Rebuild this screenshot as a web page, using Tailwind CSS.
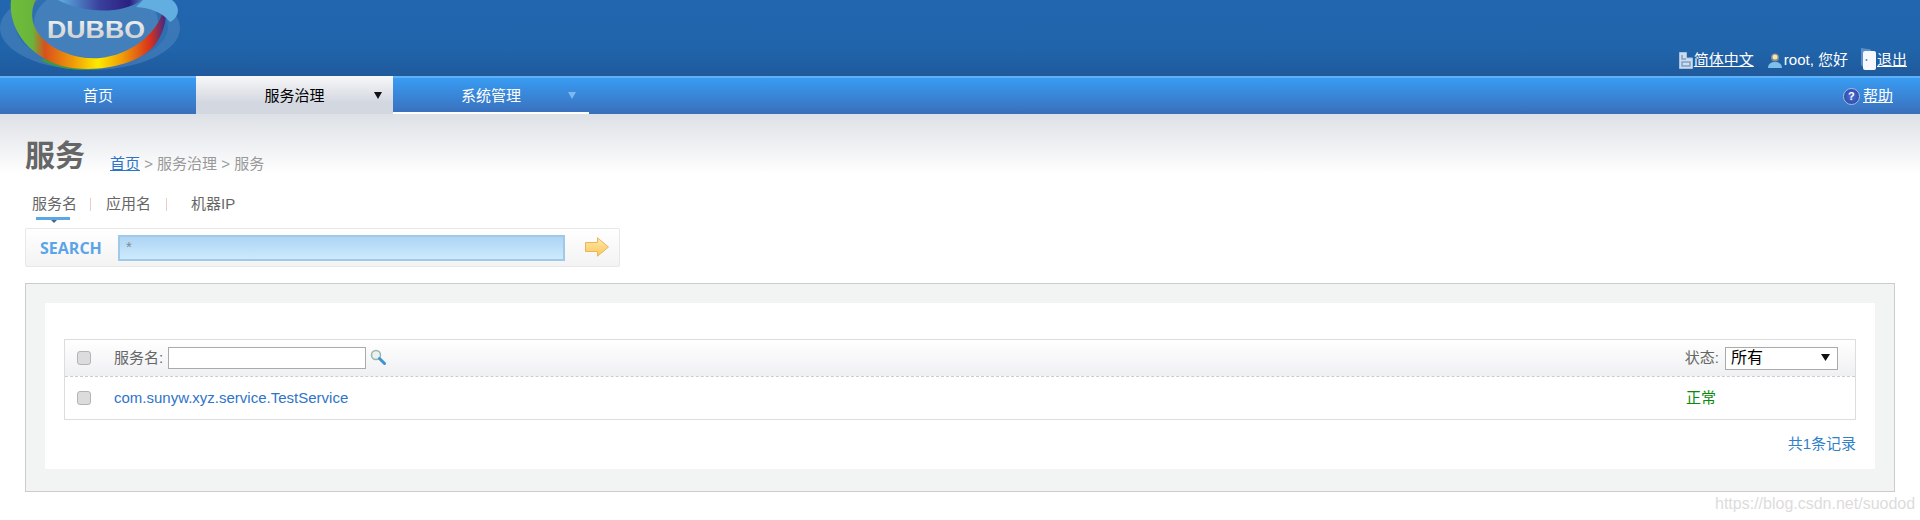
<!DOCTYPE html>
<html lang="zh-CN">
<head>
  <meta charset="UTF-8" />
  <title>Dubbo | 服务</title>
  <script src="https://cdn.jsdelivr.net/npm/@tailwindcss/browser@4"></script>
</head>
<body class="bg-white h-[520px] overflow-hidden relative text-[15px] text-[#666] font-['Liberation_Sans','Noto_Sans_CJK_SC',sans-serif]">

  <!-- Header -->
  <header class="h-[76px] flex justify-between bg-[linear-gradient(#2166ae,#2065ac_60%,#1f5a9c)]">
    <svg class="w-[182px] h-[76px] shrink-0" viewBox="0 0 182 76">
      <defs>
        <linearGradient id="ring" x1="0" x2="1" y1="0" y2="0">
          <stop offset="0" stop-color="#6fbd3a" />
          <stop offset=".14" stop-color="#69b53c" />
          <stop offset=".22" stop-color="#d8501c" />
          <stop offset=".4" stop-color="#f09a08" />
          <stop offset=".56" stop-color="#fdea00" />
          <stop offset=".72" stop-color="#f09a08" />
          <stop offset=".9" stop-color="#d8301c" />
          <stop offset="1" stop-color="#3a2a8c" />
        </linearGradient>
        <linearGradient id="swirl" x1="0" x2="1" y1="0" y2="0">
          <stop offset="0" stop-color="#5cb0e2" />
          <stop offset=".5" stop-color="#3a3f9c" />
          <stop offset=".85" stop-color="#2a2080" />
          <stop offset="1" stop-color="#4a70c0" />
        </linearGradient>
        <linearGradient id="word" x1="0" x2="0" y1="0" y2="1">
          <stop offset="0" stop-color="#f4f4f4" />
          <stop offset="1" stop-color="#c4c8cc" />
        </linearGradient>
      </defs>
      <ellipse cx="90" cy="28" rx="90" ry="42" fill="#5a8fc4" fill-opacity=".45" />
      <ellipse cx="92" cy="27" rx="76" ry="38" fill="#2e6fb2" />
      <ellipse cx="96" cy="22" rx="62" ry="36" fill="#4380bb" />
      <path d="M40 60C60 70 80 71 100 69L62 56Z" fill="#3b9a45" />
      <path d="M11 0C8 25 25 55 62 66C90 73 135 68 155 45C162 35 166 25 166 12L162 14C155 35 130 55 100 58C75 60 40 48 33 22C31 12 33 5 36 0Z" fill="url(#ring)" />
      <path d="M58 0C80 12 120 16 142 0Z" fill="url(#swirl)" />
      <path d="M143 0H172C182 8 178 18 170 22C162 12 150 8 136 7Z" fill="#62aee0" />
      <text x="47" y="38" textLength="98" lengthAdjust="spacingAndGlyphs" font-size="23" font-weight="700" fill="url(#word)">DUBBO</text>
    </svg>
    <div class="flex items-center gap-[13px] h-[24px] mt-[48px] mr-[13px] text-white">
      <a href="#" class="flex items-center gap-[1px] underline">
        <svg class="w-[14px] h-[17px]" viewBox="0 0 14 17"><path d="M.5.5H7.500V6H13.500V16.500H.5Z" fill="#cfdcec" stroke="#a8c0dc" /><path d="M3 3V7H7M3 10H11V14H3Z" fill="none" stroke="#7f9fc6" stroke-width="1.500" /></svg>
        简体中文
      </a>
      <span class="flex items-center gap-[1px]">
        <svg class="w-[16px] h-[17px]" viewBox="0 0 16 17"><circle cx="8" cy="5.500" r="4" fill="#8a8f86" /><circle cx="8" cy="5" r="2.500" fill="#f6e6b8" /><path d="M1 16C1 11 5 10 8 10C11 10 15 11 15 16Z" fill="#7cc0ea" /></svg>
        root, 您好
      </span>
      <a href="#" class="flex items-center gap-[1px] underline">
        <svg class="w-[15px] h-[22px] -mt-[3px]" viewBox="0 0 15 22"><path d="M0 0L10 1.500V21L3 20L0 17Z" fill="#5a90cc" /><rect x="2" y="3" width="13" height="19" rx="2" fill="#f6f8fc" /><circle cx="5.500" cy="12" r="1" fill="#4f88c6" /></svg>
        退出
      </a>
    </div>
  </header>

  <!-- Nav -->
  <nav class="h-[36px] flex text-white border-t-2 border-[#5fb0f6] bg-[linear-gradient(#389cf3,#3a6fbb)] box-content">
    <a href="#" class="w-[196px] flex items-center justify-center pt-[1px]">首页</a>
    <a href="#" class="w-[197px] h-[38px] -mt-[2px] pt-[2px] relative flex items-center justify-center text-black bg-[linear-gradient(#f8f8f9,#d3d7e0_70%)]">
      服务治理
      <svg class="absolute left-[178px] top-[16px] w-[8px] h-[7px]" viewBox="0 0 8 7"><path d="M0 0H8L4 7Z" fill="#111" /></svg>
    </a>
    <a href="#" class="w-[196px] pt-[3px] relative flex items-center justify-center border-b-2 border-white">
      系统管理
      <svg class="absolute left-[175px] top-[14px] w-[8px] h-[7px]" viewBox="0 0 8 7"><path d="M0 0H8L4 7Z" fill="#7db8f0" /></svg>
    </a>
    <div class="ml-auto mr-[27px] flex items-center gap-[3px]">
      <span class="w-[17px] h-[17px] rounded-full bg-[radial-gradient(#4a70d8,#27409c)] border border-[#a8bce0] text-white text-[11px] font-bold leading-[15px] text-center">?</span>
      <a href="#" class="underline">帮助</a>
    </div>
  </nav>

  <main class="bg-[linear-gradient(#dde0e5,#fff_60px)] px-[25px] pt-[22px]">
    <!-- Title and breadcrumb -->
    <div class="flex items-end h-[40px]">
      <h1 class="w-[85px] text-[30px] leading-[40px] font-bold text-[#666]">服务</h1>
      <p class="pb-[1px] text-[#999]"><a href="#" class="text-[#2b74c8] underline">首页</a> &gt; 服务治理 &gt; 服务</p>
    </div>

    <!-- Search tabs -->
    <div class="flex items-center h-[20px] mt-[18px] pl-[7px]">
      <span class="w-[44px] relative whitespace-nowrap">服务名
        <i class="absolute left-[4px] top-[24px] w-[34px] h-[3px] bg-[#5ba7e6]"></i>
        <i class="absolute left-[19px] top-[27px] w-0 h-0 border-x-[3px] border-t-[3px] border-x-transparent border-t-[#44688c]"></i>
      </span>
      <i class="ml-[14px] w-px h-[13px] bg-[#e8cfc4]"></i>
      <span class="ml-[15px] w-[45px] whitespace-nowrap">应用名</span>
      <i class="ml-[15px] w-px h-[13px] bg-[#e8cfc4]"></i>
      <span class="ml-[24px]">机器IP</span>
    </div>

    <!-- Search box -->
    <div class="w-[595px] h-[39px] mt-[14px] flex items-center border border-[#e8e8e8] rounded-[2px] bg-[linear-gradient(#fff,#f3f3f3)]">
      <span class="w-[92px] pl-[14px] text-[16px] font-bold text-[#5ca4e8] font-['Open_Sans',sans-serif] leading-none">SEARCH</span>
      <div class="w-[447px] h-[26px] pl-[6px] text-[#888] text-[15px] leading-[20px] border-2 border-[#a2c8e8] bg-[linear-gradient(#add5f4,#cdeafd)]">*</div>
      <svg class="ml-[20px] mb-[1px] w-[24px] h-[20px]" viewBox="0 0 24 20">
        <defs><linearGradient id="arrow" x1="0" x2="0" y1="0" y2="1"><stop offset="0" stop-color="#ffe9a8" /><stop offset="1" stop-color="#fbc65e" /></linearGradient></defs>
        <path d="M.5 5.500H12.500V.8L23.500 10L12.500 19.200V14.500H.5Z" fill="url(#arrow)" stroke="#eab55a" />
      </svg>
    </div>

    <!-- Result panel -->
    <section class="w-[1870px] h-[209px] mt-[16px] p-[19px] border border-[#ccc] bg-[#f2f3f3]">
      <div class="h-[166px] px-[19px] pt-[36px] bg-white">
        <div class="border border-[#ddd]">
          <div class="h-[37px] flex items-center border-b border-dashed border-[#ccc] bg-[linear-gradient(#fff,#eff0f2)]">
            <input type="checkbox" class="appearance-none ml-[12px] w-[14px] h-[14px] rounded-[3px] border border-[#b4b4b4] bg-[#dcdcdc]" />
            <span class="ml-[23px] w-[54px]">服务名:</span>
            <input type="text" class="w-[198px] h-[22px] border border-[#aaa] bg-white" />
            <svg class="ml-[4px] mb-[3px] w-[16px] h-[16px]" viewBox="0 0 16 16"><circle cx="6" cy="6" r="4.500" fill="#e8f2ee" stroke="#9ab4ae" stroke-width="1.500" /><path d="M9.500 9.500L14.500 14.500" stroke="#3f94d0" stroke-width="3" stroke-linecap="round" /></svg>
            <span class="ml-auto">状态:</span>
            <div class="ml-[6px] mr-[17px] w-[113px] relative">
              <select class="appearance-none w-full h-[23px] pl-[5px] leading-[20px] text-[16px] text-black border border-[#aaa] bg-white rounded-none"><option>所有</option></select>
              <svg class="absolute left-[96px] top-[7px] w-[9px] h-[7px]" viewBox="0 0 9 7"><path d="M0 0H9L4.500 7Z" fill="#111" /></svg>
            </div>
          </div>
          <div class="h-[42px] flex items-center">
            <input type="checkbox" class="appearance-none ml-[12px] w-[14px] h-[14px] rounded-[3px] border border-[#b4b4b4] bg-[#dcdcdc]" />
            <a href="#" class="ml-[23px] text-[#2f74c9]">com.sunyw.xyz.service.TestService</a>
            <span class="ml-auto mr-[138px] w-[31px] text-[#0a8a0a]">正常</span>
          </div>
        </div>
        <p class="mt-[13px] text-right text-[#2f7fc9]">共1条记录</p>
      </div>
    </section>
  </main>

  <!-- Watermark on top of the picture -->
  <span class="absolute left-[1715px] top-[492px] text-[16px] text-[#dcdcdc] font-['Liberation_Sans',sans-serif]">https://blog.csdn.net/suodod</span>
</body>
</html>
